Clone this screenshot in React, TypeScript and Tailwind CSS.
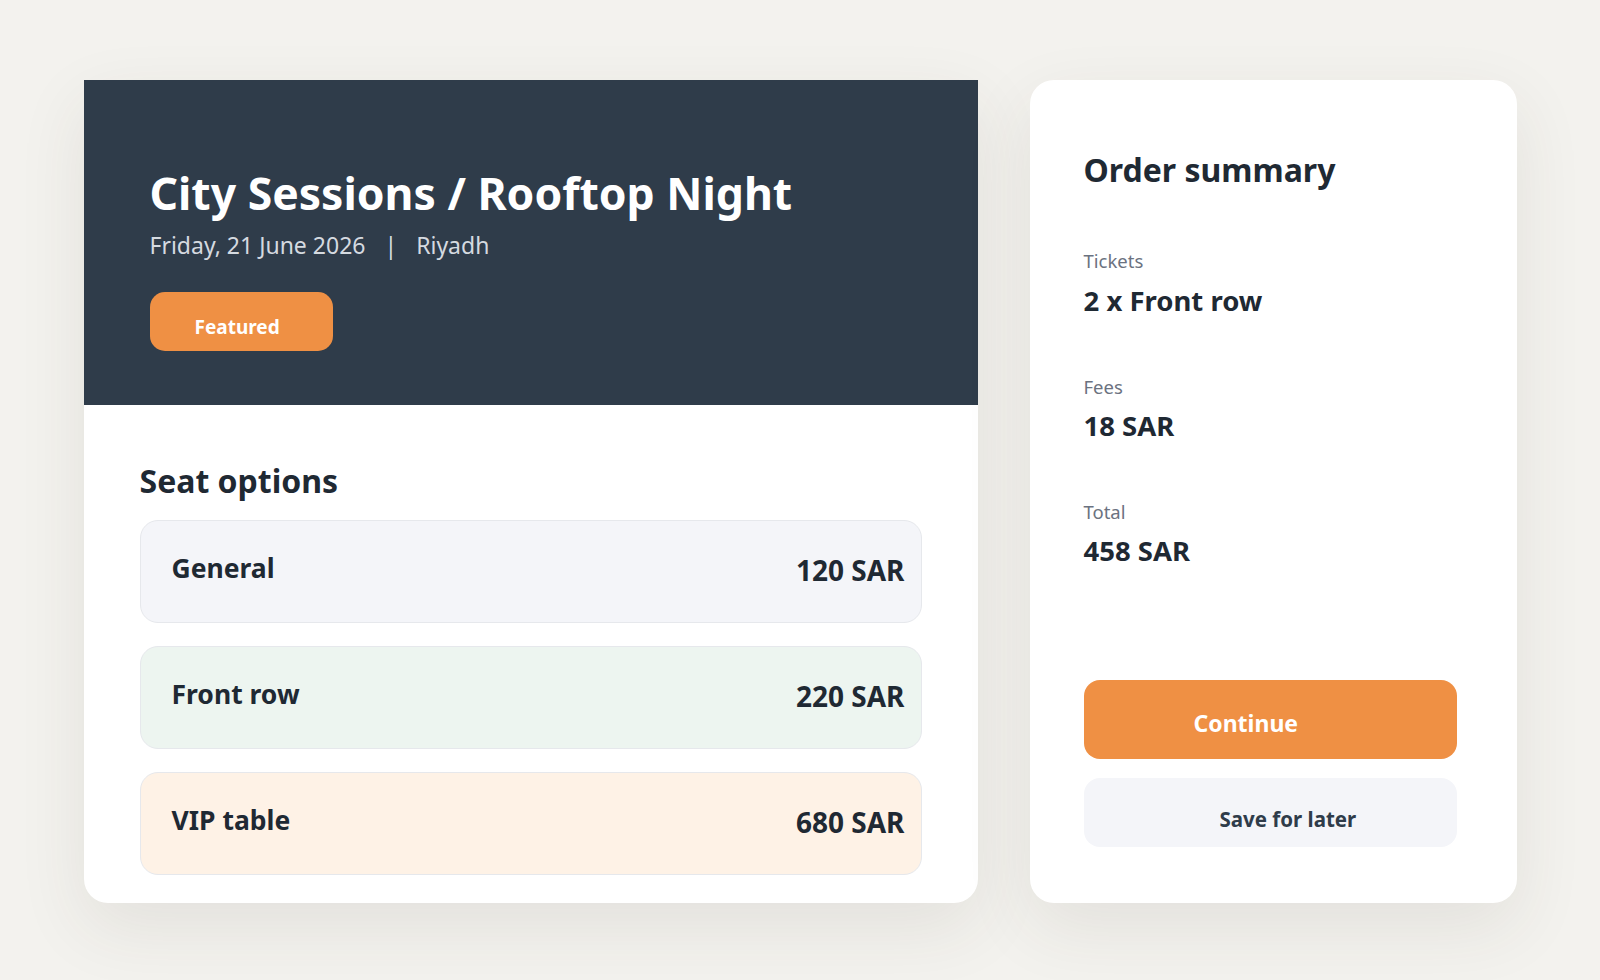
const font = "font-['Segoe_UI','Noto_Sans',sans-serif]"

const seats = [
  { name: 'General', price: '120 SAR', tone: 'bg-[#f4f5f9]' },
  { name: 'Front row', price: '220 SAR', tone: 'bg-[#edf5f0]' },
  { name: 'VIP table', price: '680 SAR', tone: 'bg-[#fef2e6]' },
]

const summary = [
  { label: 'Tickets', value: '2 x Front row' },
  { label: 'Fees', value: '18 SAR' },
  { label: 'Total', value: '458 SAR' },
]

export default function App() {
  return (
    <div className={`min-h-screen bg-[#f3f2ee] ${font} text-[#1f2933]`}>
      <div className="flex items-stretch justify-center gap-[52px] pt-[80px]">
        {/* Event card */}
        <div className="w-[894px] rounded-b-[24px] bg-white shadow-[0_24px_70px_rgba(70,60,40,0.09)]">
          <div className="h-[325px] bg-[#2f3c4a] pl-[66px] pt-[86px]">
            <h1 className="text-[44.5px] leading-[1.2] font-bold text-white">
              City Sessions / Rooftop Night
            </h1>
            <p className="mt-[13px] text-[23px] leading-[1.2] text-[#d5dae0]">
              Friday, 21 June 2026
              <span className="mx-[19px]">|</span>
              Riyadh
            </p>
            <div className="mt-[32px] flex h-[59px] w-[183px] items-center rounded-[15px] bg-[#ef9044] pl-[45px] pt-[12px]">
              <span className="text-[19px] leading-none font-bold text-white">Featured</span>
            </div>
          </div>

          <div className="px-[56px] pt-[57px] pb-[28px]">
            <h2 className="text-[32px] leading-[1.2] font-bold">Seat options</h2>
            <div className="mt-[20px] flex flex-col gap-[23px]">
              {seats.map((s) => (
                <div
                  key={s.name}
                  className={`flex h-[103px] justify-between rounded-[18px] border border-[#e6e8ec] ${s.tone} pr-[16px] pl-[31px]`}
                >
                  <span className="pt-[32px] text-[26.5px] leading-[1.2] font-bold">{s.name}</span>
                  <span className="pt-[33px] text-[28px] leading-[1.2] font-bold">{s.price}</span>
                </div>
              ))}
            </div>
          </div>
        </div>

        {/* Order summary */}
        <div className="flex w-[487px] flex-col rounded-[24px] bg-white pt-[71px] pr-[60px] pb-[56px] pl-[54px] shadow-[0_24px_70px_rgba(70,60,40,0.09)]">
          <h2 className="text-[32px] leading-[1.2] font-bold">Order summary</h2>
          <div className="mt-[61px] flex flex-col gap-[59px]">
            {summary.map((row) => (
              <div key={row.label}>
                <div className="text-[18.5px] leading-[1.2] text-[#6b7280]">{row.label}</div>
                <div className="mt-[11px] text-[27.5px] leading-[1.2] font-bold">{row.value}</div>
              </div>
            ))}
          </div>

          <div className="mt-auto flex flex-col gap-[19px]">
            <button className="flex h-[79px] items-center rounded-[16px] bg-[#ef9044] pt-[8px] pl-[110px] text-[23px] leading-none font-bold text-white">
              Continue
            </button>
            <button className="flex h-[69px] items-center rounded-[16px] bg-[#f4f5f9] pt-[13px] pl-[136px] text-[20.5px] leading-none font-bold text-[#2f3c4a]">
              Save for later
            </button>
          </div>
        </div>
      </div>
    </div>
  )
}
